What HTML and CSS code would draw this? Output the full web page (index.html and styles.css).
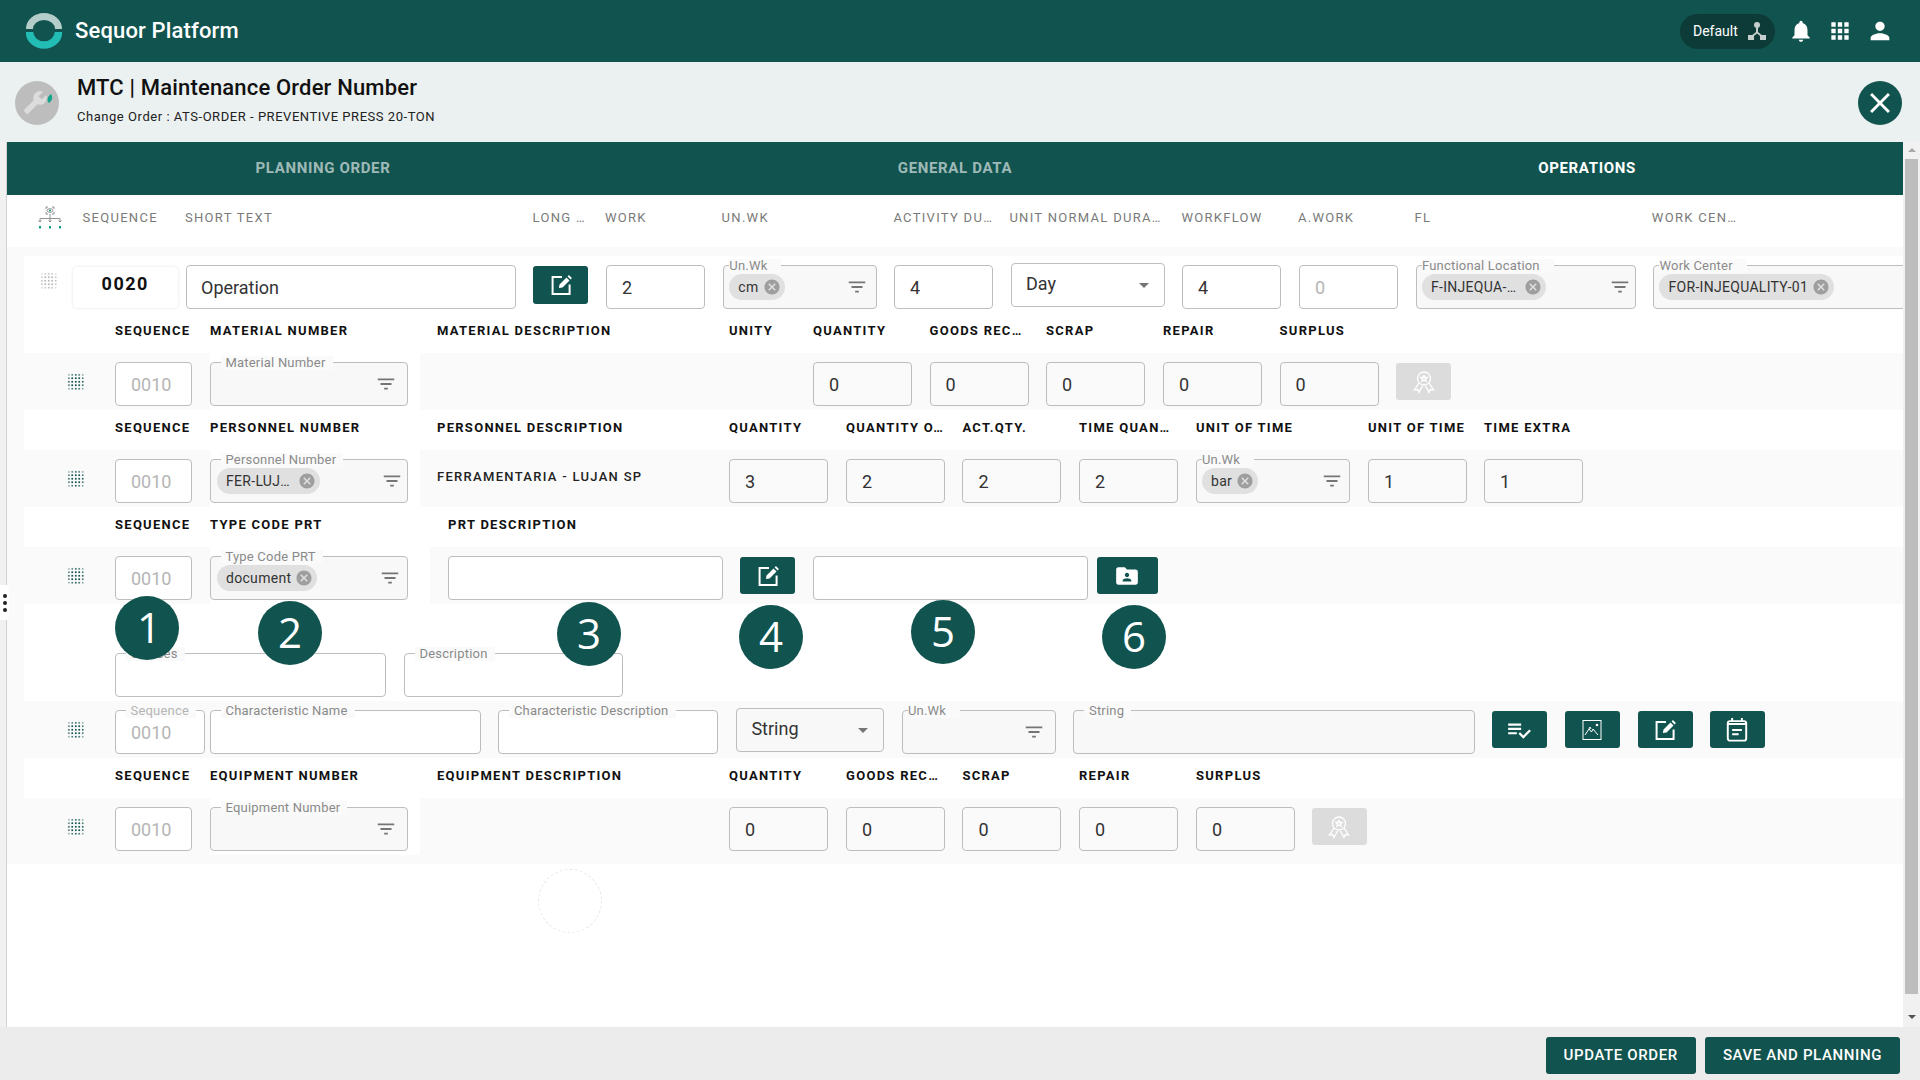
FILE: index.html
```html
<!DOCTYPE html>
<html lang="en">
<head>
  <meta charset="UTF-8">
  <title>Sequor Platform</title>
  <link rel="stylesheet" href="styles.css">
</head>
<body>
  <svg class="icon-defs" width="0" height="0">
    <defs>
      <symbol id="i-filter" viewBox="0 0 24 24"><path d="M10 18h4v-2h-4v2zM3 6v2h18V6H3zm3 7h12v-2H6v2z"/></symbol>
      <symbol id="i-cancel" viewBox="0 0 24 24"><path d="M12 2C6.47 2 2 6.47 2 12s4.47 10 10 10 10-4.47 10-10S17.53 2 12 2zm5 13.59L15.59 17 12 13.41 8.41 17 7 15.59 10.59 12 7 8.41 8.41 7 12 10.59 15.59 7 17 8.41 13.41 12 17 15.59z"/></symbol>
      <symbol id="i-edit" viewBox="0 0 24 24"><path d="M13 4H3.6v17h17v-9.5" fill="none" stroke="#fff" stroke-width="2"/><path d="M10.5 11.5l7-7 3 3-7 7-3.6.6zM18.6 3.4l1.3-1.3 3 3-1.3 1.3z" fill="#fff"/></symbol>
      <symbol id="i-award" viewBox="0 0 24 24"><g fill="none" stroke="#fff" stroke-width="1.3"><circle cx="12" cy="8.5" r="6.5"/><path d="M12 5.5l1 2h2l-1.6 1.5.6 2.2-2-1.2-2 1.2.6-2.2L9 7.5h2zM7 13l-4.5 7 3.2-.5 1.3 3 3.5-6.5M17 13l4.5 7-3.2-.5-1.3 3-3.5-6.5"/></g></symbol>
    </defs>
  </svg>

  <header class="topbar">
    <svg class="logo" width="36" height="36" viewBox="0 0 36 36">
      <path d="M3.5 16A14.5 12.5 0 0 1 32.5 16" fill="none" stroke="#b4cdca" stroke-width="7"/>
      <path d="M3.5 19A14.5 13 0 0 0 32.5 19" fill="none" stroke="#22bdb5" stroke-width="7.5"/>
    </svg>
    <span class="brand">Sequor Platform</span>
    <div class="topbar-right">
      <div class="plant-pill">
        <span>Default</span>
        <svg width="20" height="20" viewBox="0 0 20 20" fill="#c4cfcd">
          <circle cx="10" cy="4" r="3"/>
          <rect x="1" y="14" width="6" height="5"/>
          <rect x="13" y="14" width="6" height="5"/>
          <path d="M9 5h2v6l5 4-1 1.5-5-4-5 4L4 15l5-4z"/>
        </svg>
      </div>
      <svg class="top-icon" width="26" height="26" viewBox="0 0 24 24"><path d="M12 22c1.1 0 2-.9 2-2h-4c0 1.1.89 2 2 2zm6-6v-5c0-3.07-1.64-5.64-4.5-6.32V4c0-.83-.67-1.5-1.5-1.5s-1.5.67-1.5 1.5v.68C7.63 5.36 6 7.92 6 11v5l-2 2v1h16v-1l-2-2z"/></svg>
      <svg class="top-icon" width="26" height="26" viewBox="0 0 24 24"><path d="M4 8h4V4H4v4zm6 12h4v-4h-4v4zm-6 0h4v-4H4v4zm0-6h4v-4H4v4zm6 0h4v-4h-4v4zm6-10v4h4V4h-4zm-6 4h4V4h-4v4zm6 6h4v-4h-4v4zm0 6h4v-4h-4v4z"/></svg>
      <svg class="top-icon" width="28" height="28" viewBox="0 0 24 24"><path d="M12 12c2.21 0 4-1.79 4-4s-1.79-4-4-4-4 1.79-4 4 1.79 4 4 4zm0 2c-2.67 0-8 1.34-8 4v2h16v-2c0-2.66-5.33-4-8-4z"/></svg>
    </div>
  </header>

  <section class="order-title">
    <div class="order-avatar">
      <svg width="44" height="44" viewBox="0 0 44 44">
        <g transform="translate(33 9) rotate(90) scale(1.05)"><path fill="#dcdcdc" d="M22.7 19l-9.1-9.1c.9-2.3.4-5-1.5-6.9-2-2-5-2.4-7.4-1.3L9 6 6 9 1.6 4.7C.4 7.1.9 10.1 2.9 12.1c1.9 1.9 4.6 2.4 6.9 1.5l9.1 9.1c.4.4 1 .4 1.4 0l2.3-2.3c.5-.4.5-1.1.1-1.4z"/></g>
        <path d="M36 13c2 3 1.5 6-2 9-2.5-2.5-2-6 2-9z" fill="#12a58b"/>
      </svg>
    </div>
    <div class="order-text">
      <h1>MTC | Maintenance Order Number</h1>
      <p>Change Order : ATS-ORDER - PREVENTIVE PRESS 20-TON</p>
    </div>
    <button class="close-btn">
      <svg width="34" height="34" viewBox="0 0 24 24" fill="#fff"><path d="M19 6.41L17.59 5 12 10.59 6.41 5 5 6.41 10.59 12 5 17.59 6.41 19 12 13.41 17.59 19 19 17.59 13.41 12z"/></svg>
    </button>
  </section>

  <main class="workspace">
    <div class="side-strip"></div>
    <div class="side-handle"><i></i><i></i><i></i></div>

    <div class="content">
      <nav class="tabs">
        <div class="tab">PLANNING ORDER</div>
        <div class="tab">GENERAL DATA</div>
        <div class="tab tab-active">OPERATIONS</div>
      </nav>

      <div class="col-heads">
        <svg class="tree-icon" width="26" height="24" viewBox="0 0 26 24" fill="none" stroke="#777" stroke-width=".8">
          <path d="M9 3V1h2M15 1h2v2M17 6v2h-2M11 8H9V6M13 8v3M3 16v-3.5h20V16M13 11v5M1.5 14.5L3 16l1.5-1.5M11.5 14.5L13 16l1.5-1.5M21.5 14.5L23 16l1.5-1.5"/>
          <ellipse cx="13" cy="4.5" rx="3" ry="1.8"/>
          <circle cx="13" cy="4.5" r="1" fill="#0f9d85" stroke="none"/>
          <g fill="#0f9d85" stroke="none"><rect x="2" y="20" width="2" height="2.5"/><rect x="12" y="20" width="2" height="2.5"/><rect x="22" y="20" width="2" height="2.5"/></g>
        </svg>
        <span>SEQUENCE</span>
        <span>SHORT TEXT</span>
        <span>LONG …</span>
        <span>WORK</span>
        <span>UN.WK</span>
        <span>ACTIVITY DU…</span>
        <span>UNIT NORMAL DURA…</span>
        <span>WORKFLOW</span>
        <span>A.WORK</span>
        <span>FL</span>
        <span>WORK CEN…</span>
      </div>

      <div class="op-card">
        <div class="op-inner">

          <!-- operation -->
          <div class="row tpl-op">
            <div class="drag drag-light"></div>
            <div class="seq-box">0020</div>
            <input class="input w-short-text" value="Operation" readonly>
            <button class="btn-icon btn-top"><svg width="24" height="24"><use href="#i-edit"/></svg></button>
            <input class="input w-99" value="2" readonly>
            <div class="field fill w-153">
              <label class="field-label tight">Un.Wk</label>
              <span class="chip">cm<svg width="18" height="18"><use href="#i-cancel"/></svg></span>
              <svg class="filter-icon pad-4" width="22" height="22"><use href="#i-filter"/></svg>
            </div>
            <input class="input w-99" value="4" readonly>
            <div class="select w-153 up-2"><span>Day</span><i class="caret"></i></div>
            <input class="input w-99" value="4" readonly>
            <input class="input w-99 muted" value="0" readonly>
            <div class="field fill w-fl">
              <label class="field-label tight">Functional Location</label>
              <span class="chip chip-cut">F-INJEQUA-…<svg width="18" height="18"><use href="#i-cancel"/></svg></span>
              <svg class="filter-icon" width="22" height="22"><use href="#i-filter"/></svg>
            </div>
            <div class="field fill w-wc">
              <label class="field-label tight">Work Center</label>
              <span class="chip">FOR-INJEQUALITY-01<svg width="18" height="18"><use href="#i-cancel"/></svg></span>
            </div>
          </div>

          <!-- material -->
          <div class="sub-head tpl-material">
            <span></span><span>SEQUENCE</span><span>MATERIAL NUMBER</span><span>MATERIAL DESCRIPTION</span><span>UNITY</span><span>QUANTITY</span><span>GOODS REC…</span><span>SCRAP</span><span>REPAIR</span><span>SURPLUS</span>
          </div>
          <div class="row band tpl-material">
            <div class="drag"></div>
            <input class="input w-76 muted" value="0010" readonly>
            <div class="select-cell">
              <div class="field fill w-197">
                <label class="field-label">Material Number</label>
                <svg class="filter-icon pad-6" width="22" height="22"><use href="#i-filter"/></svg>
              </div>
            </div>
            <span></span><span></span>
            <input class="input clear w-99" value="0" readonly>
            <input class="input clear w-99" value="0" readonly>
            <input class="input clear w-99" value="0" readonly>
            <input class="input clear w-99" value="0" readonly>
            <input class="input clear w-99" value="0" readonly>
            <button class="btn-icon btn-off"><svg width="24" height="24"><use href="#i-award"/></svg></button>
          </div>

          <!-- personnel -->
          <div class="sub-head tpl-personnel">
            <span></span><span>SEQUENCE</span><span>PERSONNEL NUMBER</span><span>PERSONNEL DESCRIPTION</span><span>QUANTITY</span><span>QUANTITY O…</span><span>ACT.QTY.</span><span>TIME QUAN…</span><span>UNIT OF TIME</span><span>UNIT OF TIME</span><span>TIME EXTRA</span>
          </div>
          <div class="row band tpl-personnel">
            <div class="drag"></div>
            <input class="input w-76 muted" value="0010" readonly>
            <div class="select-cell">
              <div class="field fill w-197">
                <label class="field-label">Personnel Number</label>
                <span class="chip chip-cut">FER-LUJ…<svg width="18" height="18"><use href="#i-cancel"/></svg></span>
                <svg class="filter-icon" width="22" height="22"><use href="#i-filter"/></svg>
              </div>
            </div>
            <div class="desc-text">FERRAMENTARIA - LUJAN SP</div>
            <input class="input clear w-99" value="3" readonly>
            <input class="input clear w-99" value="2" readonly>
            <input class="input clear w-99" value="2" readonly>
            <input class="input clear w-99" value="2" readonly>
            <div class="field fill w-153">
              <label class="field-label tight">Un.Wk</label>
              <span class="chip">bar<svg width="18" height="18"><use href="#i-cancel"/></svg></span>
              <svg class="filter-icon pad-2" width="22" height="22"><use href="#i-filter"/></svg>
            </div>
            <input class="input clear w-99" value="1" readonly>
            <input class="input clear w-99" value="1" readonly>
          </div>

          <!-- prt -->
          <div class="sub-head tpl-prt">
            <span></span><span>SEQUENCE</span><span>TYPE CODE PRT</span><span>PRT DESCRIPTION</span>
          </div>
          <div class="row band tpl-prt">
            <div class="drag"></div>
            <input class="input w-76 muted" value="0010" readonly>
            <div class="select-cell select-cell-wide">
              <div class="field fill w-197">
                <label class="field-label">Type Code PRT</label>
                <span class="chip">document<svg width="18" height="18"><use href="#i-cancel"/></svg></span>
                <svg class="filter-icon pad-2" width="22" height="22"><use href="#i-filter"/></svg>
              </div>
            </div>
            <input class="input w-274" readonly>
            <button class="btn-icon"><svg width="24" height="24"><use href="#i-edit"/></svg></button>
            <input class="input w-274" readonly>
            <button class="btn-icon btn-wide">
              <svg width="26" height="26" viewBox="0 0 24 24" fill="#fff"><path d="M20 6h-8l-2-2H4c-1.1 0-2 .9-2 2v12c0 1.1.9 2 2 2h16c1.1 0 2-.9 2-2V8c0-1.1-.9-2-2-2zm-8 3c1.1 0 2 .9 2 2s-.9 2-2 2-2-.9-2-2 .9-2 2-2zm4 8H8v-1c0-1.33 2.67-2 4-2s4 .67 4 2v1z"/></svg>
            </button>
          </div>

          <div class="gap-row">
            <div class="field w-270">
              <label class="field-label">Classes</label>
            </div>
            <div class="field w-219">
              <label class="field-label">Description</label>
            </div>
          </div>

          <!-- characteristic -->
          <div class="row band tpl-char">
            <div class="drag"></div>
            <div class="field w-89 seq-field">
              <label class="field-label faded">Sequence</label>
              <span>0010</span>
            </div>
            <div class="field w-270">
              <label class="field-label">Characteristic Name</label>
            </div>
            <div class="field w-220">
              <label class="field-label">Characteristic Description</label>
            </div>
            <div class="select fill w-147 up-2"><span>String</span><i class="caret"></i></div>
            <div class="field fill w-153">
              <label class="field-label tight">Un.Wk</label>
              <svg class="filter-icon pad-6" width="22" height="22"><use href="#i-filter"/></svg>
            </div>
            <div class="field fill w-401">
              <label class="field-label">String</label>
            </div>
            <button class="btn-icon">
              <svg width="26" height="26" viewBox="0 0 24 24" fill="#fff"><path d="M14 10H2v2h12v-2zm0-4H2v2h12V6zM2 16h8v-2H2v2zm19.5-4.5L23 13l-6.99 7-4.51-4.5L13 14l3.01 3 5.49-5.5z"/></svg>
            </button>
            <button class="btn-icon">
              <svg width="24" height="24" viewBox="0 0 24 24" fill="none" stroke="#fff"><rect x="3" y="2.500" width="18" height="19" stroke-width="1"/><path d="M5 17l4-6 2.500 3L13 11l5 6M9 11l1-2 1 2" stroke-width="1"/><circle cx="17" cy="7" r="1.300" fill="#fff" stroke="none"/></svg>
            </button>
            <button class="btn-icon"><svg width="24" height="24"><use href="#i-edit"/></svg></button>
            <button class="btn-icon">
              <svg width="26" height="26" viewBox="0 0 24 24" fill="none" stroke="#fff" stroke-width="1.8"><rect x="3.5" y="3.8" width="17" height="18" rx="2"/><path d="M3.5 6.5h17M7.5 1v3.5M16.5 1v3.5M7.5 12h9M7.5 16h6"/></svg>
            </button>
          </div>

          <!-- equipment -->
          <div class="sub-head tpl-equip">
            <span></span><span>SEQUENCE</span><span>EQUIPMENT NUMBER</span><span>EQUIPMENT DESCRIPTION</span><span>QUANTITY</span><span>GOODS REC…</span><span>SCRAP</span><span>REPAIR</span><span>SURPLUS</span>
          </div>
          <div class="row band band-tall tpl-equip">
            <div class="drag"></div>
            <input class="input w-76 muted" value="0010" readonly>
            <div class="select-cell">
              <div class="field fill w-197">
                <label class="field-label">Equipment Number</label>
                <svg class="filter-icon pad-6" width="22" height="22"><use href="#i-filter"/></svg>
              </div>
            </div>
            <span></span>
            <input class="input clear w-99" value="0" readonly>
            <input class="input clear w-99" value="0" readonly>
            <input class="input clear w-99" value="0" readonly>
            <input class="input clear w-99" value="0" readonly>
            <input class="input clear w-99" value="0" readonly>
            <button class="btn-icon btn-off"><svg width="24" height="24"><use href="#i-award"/></svg></button>
          </div>

        </div>
      </div>

      <!-- numbered callouts drawn over the form -->
      <div class="callout c1">1</div>
      <div class="callout c2">2</div>
      <div class="callout c3">3</div>
      <div class="callout c4">4</div>
      <div class="callout c5">5</div>
      <div class="callout c6">6</div>
      <div class="loader-ring"></div>
    </div>

    <div class="scrollbar">
      <i class="arrow-up"></i>
      <div class="thumb"></div>
      <i class="arrow-down"></i>
    </div>
  </main>

  <footer class="actions">
    <button class="btn-action">UPDATE ORDER</button>
    <button class="btn-action">SAVE AND PLANNING</button>
  </footer>
</body>
</html>
```

FILE: styles.css
```css
* {
  box-sizing: border-box;
}

body {
  margin: 0;
  height: 1080px;
  overflow: hidden;
  display: flex;
  flex-direction: column;
  font-family: Roboto, sans-serif;
  background-color: #fff;
  color: #222;
}

.icon-defs {
  position: absolute;
}

button {
  border: none;
  padding: 0;
  font-family: inherit;
}

/* top bar */
.topbar {
  height: 62px;
  flex: none;
  display: flex;
  align-items: center;
  background-color: #11544f;
  color: #fff;
  padding-left: 26px;
}

.brand {
  margin-left: 13px;
  padding-bottom: 2px;
  font-size: 22px;
  font-weight: 500;
  letter-spacing: .15px;
}

.topbar-right {
  margin-left: auto;
  display: flex;
  align-items: center;
  padding-right: 26px;
}

.plant-pill {
  width: 95px;
  height: 35px;
  border-radius: 18px;
  background-color: #0d3b38;
  display: flex;
  align-items: center;
  gap: 9px;
  padding-left: 13px;
  font-size: 14px;
}

.top-icon {
  fill: #fff;
  margin-left: 13px;
}

/* order title */
.order-title {
  height: 80px;
  flex: none;
  display: flex;
  align-items: center;
  background-color: #ebf0f0;
  padding: 0 18px 2px 15px;
}

.order-avatar {
  width: 44px;
  height: 44px;
  border-radius: 50%;
  background-color: #bdbdbd;
  margin-top: 3px;
}

.order-text {
  margin-left: 18px;
  margin-bottom: 3px;
}

.order-text h1 {
  margin: 0;
  font-size: 22px;
  font-weight: 500;
  line-height: 26px;
  letter-spacing: .17px;
  color: #111;
}

.order-text p {
  margin: 8px 0 0;
  font-size: 13px;
  line-height: 16px;
  letter-spacing: .54px;
  color: #222;
}

.close-btn {
  margin-left: auto;
  margin-top: 3px;
  width: 44px;
  height: 44px;
  border-radius: 50%;
  background-color: #11544f;
  display: flex;
  align-items: center;
  justify-content: center;
}

/* main area */
.workspace {
  flex: 1;
  min-height: 0;
  position: relative;
  display: flex;
}

.side-strip {
  width: 7px;
  flex: none;
  background-color: #f1f1f1;
  border-right: 1px solid #d2d2d2;
}

.side-handle {
  position: absolute;
  left: 0;
  top: 443px;
  width: 9px;
  height: 35px;
  background-color: #fff;
  border-radius: 0 4px 4px 0;
  display: flex;
  flex-direction: column;
  align-items: center;
  justify-content: center;
  gap: 3px;
  z-index: 3;
}

.side-handle i {
  width: 4px;
  height: 4px;
  border-radius: 50%;
  background-color: #222;
}

.content {
  width: 1896px;
  flex: none;
  position: relative;
  overflow: hidden;
}

.tabs {
  height: 53px;
  display: grid;
  grid-template-columns: repeat(3, 632px);
  background-color: #11544f;
}

.tab {
  display: flex;
  align-items: center;
  justify-content: center;
  padding-bottom: 2px;
  font-size: 15px;
  font-weight: 700;
  letter-spacing: .65px;
  color: rgba(255, 255, 255, .6);
}

.tab-active {
  color: #fff;
}

.col-heads {
  height: 52px;
  display: grid;
  grid-template-columns: 75.5px 102.5px 347.6px 72.4px 116.6px 171.8px 116px 172px 116.5px 116.7px 237.3px 1fr;
  align-items: center;
  padding-bottom: 7px;
  font-size: 13px;
  letter-spacing: 1.3px;
  color: #7a7a7a;
  white-space: nowrap;
}

.col-heads .tree-icon {
  margin-left: 30px;
}

.op-card {
  background-color: #fafafa;
  padding: 9px 0 0 17px;
}

.op-inner {
  background-color: #fff;
}

/* rows, each section keeps its own column starts */
.row {
  display: grid;
  height: 57px;
  padding-top: 9px;
  align-items: start;
}

.band {
  background-color: #fafafa;
}

.band-tall {
  height: 66px;
}

.sub-head {
  display: grid;
  height: 40px;
  align-items: center;
  padding-bottom: 5px;
  font-size: 13px;
  font-weight: 700;
  letter-spacing: 1.28px;
  color: #111;
  white-space: nowrap;
}

.tpl-op {
  grid-template-columns: 49px 113px 347px 73px 117.3px 170.7px 117px 171px 117px 117px 237.5px 1fr;
}

.tpl-material {
  grid-template-columns: 91px 95px 227px 292px 84px 116.5px 116.5px 117px 116.5px 116.5px 1fr;
}

.tpl-personnel {
  grid-template-columns: 91px 95px 227px 292px 117px 116.4px 116.6px 117px 172px 116px 1fr;
}

.tpl-prt {
  grid-template-columns: 91px 95px 238px 292px 73.4px 283.6px 1fr;
}

.tpl-char {
  grid-template-columns: 91px 95px 288.4px 238px 165.6px 171.5px 418.5px 73px 73px 72px 1fr;
}

.tpl-equip {
  grid-template-columns: 91px 95px 227px 292px 117px 116.4px 116.6px 117px 116px 1fr;
}

.gap-row {
  height: 97px;
  display: flex;
  align-items: flex-start;
  padding: 49px 0 0 91px;
  gap: 18px;
}

/* inputs */
.input {
  display: block;
  height: 44px;
  border: 1px solid #bdbdbd;
  border-radius: 4px;
  background-color: #fff;
  padding: 0 15px;
  font-family: inherit;
  font-size: 18px;
  color: #333;
  outline: none;
}

.input.clear {
  background-color: #fafafa;
}

.input.muted {
  color: #b5b5b5;
}

.w-76 { width: 76.5px; }
.w-89 { width: 89.5px; }
.w-99 { width: 99px; }
.w-147 { width: 147.5px; }
.w-153 { width: 154px; }
.w-197 { width: 198px; }
.w-219 { width: 219px; }
.w-220 { width: 220px; }
.w-270 { width: 271px; }
.w-274 { width: 274.5px; }
.w-401 { width: 402px; }
.w-fl { width: 220px; }
.w-wc { width: 270px; }
.w-short-text { width: 329.5px; padding-left: 14px; }

.seq-box {
  width: 104.5px;
  height: 41px;
  margin-top: 2px;
  border-radius: 4px;
  background-color: #fff;
  box-shadow: 0 0 3px rgba(0, 0, 0, .12);
  display: flex;
  align-items: center;
  justify-content: center;
  padding-bottom: 8px;
  font-size: 18px;
  font-weight: 700;
  letter-spacing: 1.5px;
  color: #111;
}

.field {
  position: relative;
  height: 44px;
  border: 1px solid #bdbdbd;
  border-radius: 4px;
  background-color: #fff;
  display: flex;
  align-items: center;
  padding: 0 4px 0 5px;
}

.field.fill, .select.fill {
  background-color: #f8f8f8;
}

.select-cell .field {
  padding-left: 6px;
}

.field-label {
  position: absolute;
  left: 9.5px;
  top: -7px;
  height: 14px;
  padding: 0 7px 0 5px;
  background-color: #fafafa;
  font-size: 13px;
  line-height: 14px;
  letter-spacing: .2px;
  color: #8a8a8a;
  white-space: nowrap;
}

.field-label.tight {
  left: 5px;
  padding: 0 14px 0 0;
}

.field-label.faded {
  color: #b5b5b5;
}

.seq-field {
  padding-left: 15px;
  font-size: 18px;
  color: #b5b5b5;
}

.chip {
  height: 26px;
  border-radius: 13px;
  background-color: #e0e0e0;
  display: inline-flex;
  align-items: center;
  gap: 4px;
  padding: 0 4px 0 9px;
  font-size: 14px;
  letter-spacing: .3px;
  color: #333;
  white-space: nowrap;
}

.chip-cut {
  gap: 8px;
}

.chip svg {
  fill: #9e9e9e;
}

.filter-icon {
  margin-left: auto;
  fill: #757575;
  flex: none;
}

.pad-2 { margin-right: 2px; }
.pad-4 { margin-right: 4px; }
.pad-6 { margin-right: 6px; }

.select {
  height: 44px;
  border: 1px solid #bdbdbd;
  border-radius: 4px;
  background-color: #fff;
  display: flex;
  align-items: center;
  justify-content: space-between;
  padding: 0 15px 3px 14px;
  font-size: 18px;
  color: #333;
}

.up-2 {
  margin-top: -2px;
}

.caret {
  width: 0;
  height: 0;
  margin-top: 3px;
  border-left: 5.5px solid transparent;
  border-right: 5.5px solid transparent;
  border-top: 5.5px solid #757575;
}

.select-cell {
  width: 210px;
  height: 57px;
  margin-top: -9px;
  padding-top: 9px;
  background-color: #fff;
}

.select-cell-wide {
  width: 220px;
}

.desc-text {
  margin-top: 10px;
  font-size: 13px;
  font-weight: 500;
  letter-spacing: 1.3px;
  color: #222;
  white-space: nowrap;
}

.drag {
  width: 18px;
  height: 18px;
  margin: 11px 0 0 43px;
  background-image: radial-gradient(circle, #11544f 1.1px, transparent 1.3px);
  background-size: 3.5px 3.5px;
  -webkit-mask-image: radial-gradient(circle, #000 45%, rgba(0, 0, 0, .45) 75%, transparent 100%);
  mask-image: radial-gradient(circle, #000 45%, rgba(0, 0, 0, .45) 75%, transparent 100%);
}

.drag-light {
  margin-left: 15.5px;
  margin-top: 7px;
  background-image: radial-gradient(circle, #9a9a9a 1px, transparent 1.2px);
  opacity: .7;
}

/* buttons */
.btn-icon {
  width: 55px;
  height: 37px;
  margin-top: 1px;
  border-radius: 3px;
  background-color: #11544f;
  display: flex;
  align-items: center;
  justify-content: center;
}

.btn-top {
  height: 38px;
}

.btn-wide {
  width: 61px;
}

.btn-off {
  background-color: #dcdcdc;
}

/* overlays */
.callout {
  position: absolute;
  width: 64px;
  height: 64px;
  border-radius: 50%;
  background-color: #11544f;
  color: #fff;
  display: flex;
  align-items: center;
  justify-content: center;
  padding-bottom: 3px;
  font-family: "Open Sans", sans-serif;
  font-size: 42px;
  z-index: 2;
}

.c1 { left: 108px; top: 454px; padding-left: 4px; }
.c2 { left: 251px; top: 459px; }
.c3 { left: 550px; top: 460px; }
.c4 { left: 732px; top: 463px; }
.c5 { left: 904px; top: 458px; }
.c6 { left: 1095px; top: 463px; }

.loader-ring {
  position: absolute;
  left: 531px;
  top: 727px;
  width: 64px;
  height: 64px;
  border-radius: 50%;
  border: 1px dashed #e8e8e8;
}

/* scrollbar */
.scrollbar {
  width: 17px;
  flex: none;
  background-color: #f1f1f1;
  display: flex;
  flex-direction: column;
  align-items: center;
  padding-top: 6px;
}

.arrow-up, .arrow-down {
  width: 0;
  height: 0;
  border-left: 4px solid transparent;
  border-right: 4px solid transparent;
}

.arrow-up {
  border-bottom: 4px solid #a8a8a8;
}

.arrow-down {
  margin-top: 21px;
  border-top: 4px solid #505050;
}

.thumb {
  width: 13px;
  height: 835px;
  margin-top: 7px;
  background-color: #bdbdbd;
}

/* footer */
.actions {
  height: 53px;
  flex: none;
  display: flex;
  justify-content: flex-end;
  align-items: center;
  gap: 9px;
  padding: 3px 20px 0 0;
  background-color: #ececec;
}

.btn-action {
  height: 37px;
  padding: 0 18px;
  border-radius: 3px;
  background-color: #11544f;
  color: #fff;
  font-size: 15px;
  font-weight: 500;
  letter-spacing: .62px;
}
```
